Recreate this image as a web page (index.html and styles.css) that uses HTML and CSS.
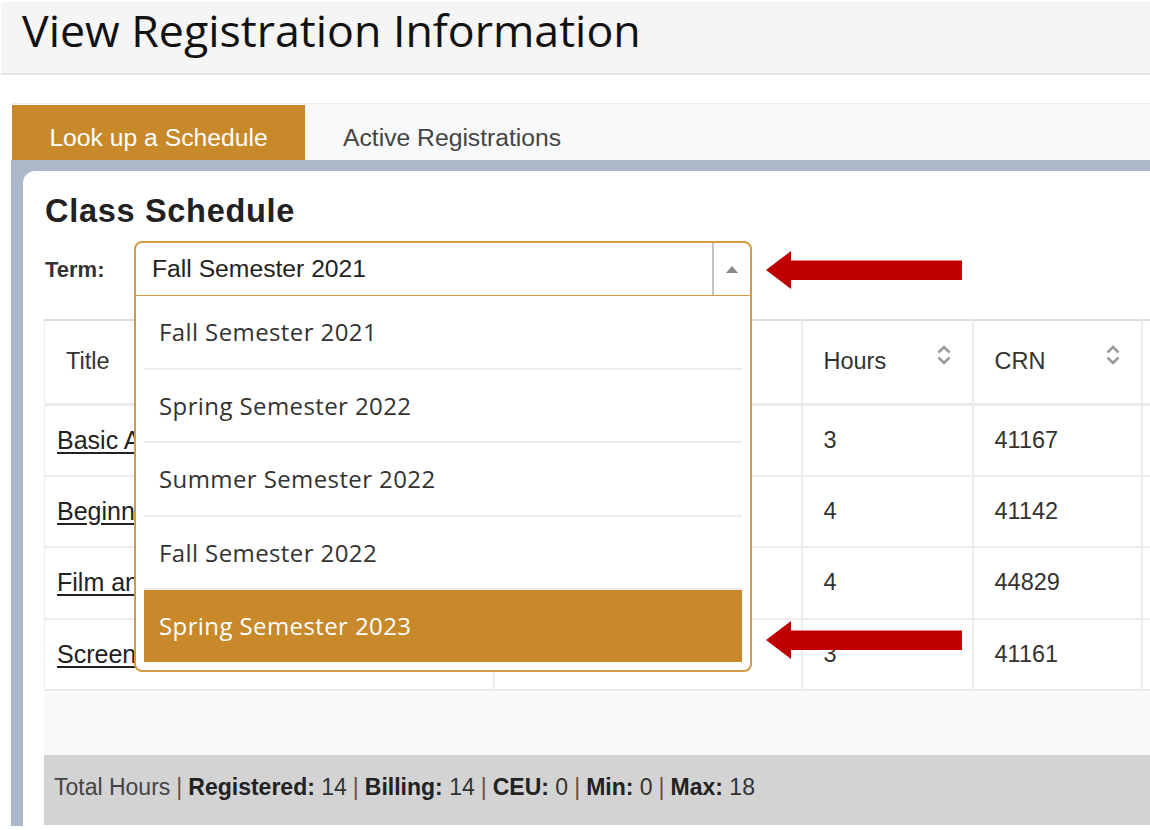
FILE: index.html
```html
<!DOCTYPE html>
<html lang="en">
<head>
<meta charset="utf-8">
<title>View Registration Information</title>
<link rel="stylesheet" href="styles.css">
</head>
<body>
<header class="page-header">
  <h1 class="page-title">View Registration Information</h1>
</header>

<nav class="tabs">
  <div class="tab tab-active">Look up a Schedule</div>
  <div class="tab">Active Registrations</div>
</nav>

<section class="frame">
  <div class="panel">
    <h2 class="panel-title">Class Schedule</h2>

    <div class="term-row">
      <label class="term-label">Term:</label>
      <div class="combo">
        <div class="combo-box">
          <span class="combo-value">Fall Semester 2021</span>
          <span class="combo-toggle"><span class="tri-up"></span></span>
        </div>
        <ul class="combo-list">
          <li class="combo-item">Fall Semester 2021</li>
          <li class="combo-item">Spring Semester 2022</li>
          <li class="combo-item">Summer Semester 2022</li>
          <li class="combo-item">Fall Semester 2022</li>
          <li class="combo-item combo-item-hl">Spring Semester 2023</li>
        </ul>
      </div>
    </div>

    <div class="grid-wrap">
      <table class="grid">
        <colgroup>
          <col class="c-title"><col class="c-details"><col class="c-hours"><col class="c-crn"><col class="c-more">
        </colgroup>
        <thead>
          <tr>
            <th><span class="th-in"><span>Title</span>
              <svg class="sort" viewBox="0 0 16 24" width="16" height="24"><polyline points="2.5,9.5 8,4 13.5,9.5"/><polyline points="2.5,14.5 8,20 13.5,14.5"/></svg></span></th>
            <th><span class="th-in"><span>Details</span></span></th>
            <th><span class="th-in"><span>Hours</span>
              <svg class="sort" viewBox="0 0 16 24" width="16" height="24"><polyline points="2.5,9.5 8,4 13.5,9.5"/><polyline points="2.5,14.5 8,20 13.5,14.5"/></svg></span></th>
            <th><span class="th-in"><span>CRN</span>
              <svg class="sort" viewBox="0 0 16 24" width="16" height="24"><polyline points="2.5,9.5 8,4 13.5,9.5"/><polyline points="2.5,14.5 8,20 13.5,14.5"/></svg></span></th>
            <th></th>
          </tr>
        </thead>
        <tbody>
          <tr><td class="td-link"><a href="#">Basic Acting</a></td><td>Lecture</td><td>3</td><td>41167</td><td></td></tr>
          <tr><td class="td-link"><a href="#">Beginning Directing</a></td><td>Lecture</td><td>4</td><td>41142</td><td></td></tr>
          <tr><td class="td-link"><a href="#">Film and Society</a></td><td>Lecture</td><td>4</td><td>44829</td><td></td></tr>
          <tr><td class="td-link"><a href="#">Screenwriting</a></td><td>Lecture</td><td>3</td><td>41161</td><td></td></tr>
        </tbody>
      </table>
    </div>

    <div class="totals">
      <span class="t-muted">Total Hours</span><span class="sep">|</span><b>Registered:</b>&nbsp;14<span class="sep">|</span><b>Billing:</b>&nbsp;14<span class="sep">|</span><b>CEU:</b>&nbsp;0<span class="sep">|</span><b>Min:</b>&nbsp;0<span class="sep">|</span><b>Max:</b>&nbsp;18
    </div>
  </div>
</section>

<svg class="callout callout-term" viewBox="0 0 196 38" width="196" height="38"><polygon points="0,19 25,0 25,9.5 196,9.5 196,29 25,29 25,38"/></svg>
<svg class="callout callout-item" viewBox="0 0 196 38" width="196" height="38"><polygon points="0,19 25,0 25,9.5 196,9.5 196,29 25,29 25,38"/></svg>
</body>
</html>
```

FILE: styles.css
```css
* { box-sizing: border-box; }

html, body {
  margin: 0;
  padding: 0;
  background: #ffffff;
  width: 1150px;
  height: 830px;
  overflow: hidden;
}

body {
  position: relative;
  font-family: "Liberation Sans", Arial, sans-serif;
  color: #333333;
}

/* ---------- page header ---------- */
.page-header {
  margin: 2px 0 28px 1px;
  height: 73px;
  background: #f5f5f5;
  border-bottom: 2px solid #e6e6e6;
  padding-left: 21px;
}

.page-title {
  margin: 0;
  font-family: "Open Sans", "Liberation Sans", sans-serif;
  font-weight: 400;
  font-size: 44.7px;
  line-height: 55px;
  color: #111111;
}

/* ---------- tabs ---------- */
.tabs {
  margin-left: 12px;
  height: 57px;
  border-top: 1px solid #ececec;
  background: #f8f9fb;
  padding-top: 1px;
  display: flex;
  align-items: stretch;
}

.tab {
  font-size: 24.7px;
  color: #444444;
  padding: 19px 38px 0 38px;
}

.tab-active {
  width: 293px;
  background: #c8892b;
  color: #ffffff;
  text-align: center;
  padding-left: 0;
  padding-right: 0;
}

/* ---------- frame + panel ---------- */
.frame {
  margin-left: 11px;
  height: 666px;
  background: #aab8c8;
  padding: 11px 0 0 12px;
}

.panel {
  height: 655px;
  background: #ffffff;
  border-top-left-radius: 12px;
  padding: 22px 0 0 21px;
  display: flex;
  flex-direction: column;
  overflow: hidden;
}

.panel-title {
  margin: 0 0 12px 1px;
  font-size: 32.5px;
  line-height: 36px;
  font-weight: 700;
  letter-spacing: 0.7px;
  color: #222222;
}

/* ---------- term combo ---------- */
.term-row {
  display: flex;
  align-items: center;
  height: 55px;
  position: relative;
  z-index: 5;
}

.term-label {
  width: 90px;
  padding-left: 1px;
  padding-top: 2px;
  font-size: 22px;
  font-weight: 700;
  color: #333333;
}

.combo {
  position: relative;
  width: 618px;
}

.combo-box {
  height: 55px;
  border: 2px solid #d39a44;
  border-bottom-width: 1.5px;
  border-radius: 8px 8px 0 0;
  background: #ffffff;
  display: flex;
  align-items: center;
}

.combo-value {
  flex: 1;
  padding-left: 16px;
  font-size: 24.7px;
  color: #222222;
}

.combo-toggle {
  width: 38px;
  height: 100%;
  border-left: 2px solid #c4c4c4;
  display: flex;
  align-items: center;
  justify-content: center;
}

.tri-up {
  width: 0;
  height: 0;
  border-left: 6px solid transparent;
  border-right: 6px solid transparent;
  border-bottom: 7px solid #8a8a8a;
}

.combo-list {
  position: absolute;
  left: 0;
  top: 100%;
  width: 618px;
  margin: 0;
  padding: 0 8px 8px 8px;
  list-style: none;
  background: #ffffff;
  border: 2px solid #d39a44;
  border-top: none;
  border-radius: 0 0 8px 8px;
}

.combo-item {
  height: 73.5px;
  border-bottom: 2px solid #ececec;
  padding-left: 15px;
  display: flex;
  align-items: center;
  font-family: "Open Sans", "Liberation Sans", sans-serif;
  font-size: 24px;
  letter-spacing: 0.4px;
  color: #333333;
}

.combo-item-hl {
  height: 71.5px;
  border-bottom: none;
  background: #c8892b;
  color: #ffffff;
}

/* ---------- grid ---------- */
.grid-wrap {
  margin-top: 23px;
  height: 436px;
  width: 1200px;
  background: #f8f9fa;
}

.grid {
  border-collapse: collapse;
  table-layout: fixed;
  width: 1300px;
  background: #ffffff;
  font-size: 23.5px;
  color: #333333;
}

.c-title { width: 449px; }
.c-details { width: 308px; }
.c-hours { width: 171px; }
.c-crn { width: 169px; }
.c-more { width: 203px; }

.grid th,
.grid td {
  border: 2px solid #ececec;
  padding: 0 0 0 21px;
  text-align: left;
  white-space: nowrap;
  overflow: hidden;
}

.grid th {
  height: 84px;
  font-weight: 400;
  border-top: 2px solid #dcdcdc;
  border-bottom: 3px solid #ececec;
  vertical-align: middle;
}

.grid tr > :first-child { border-left-width: 1px; }

.th-in {
  display: flex;
  align-items: center;
  justify-content: space-between;
  padding-right: 20px;
}

.sort {
  fill: none;
  stroke: #9a9a9a;
  stroke-width: 2.6;
  margin-top: -14px;
}

.grid td {
  height: 71.5px;
}

.grid td.td-link {
  padding-left: 12px;
  font-size: 25px;
}

.grid a {
  color: #222222;
  text-decoration: underline;
  text-underline-offset: 3px;
}

/* ---------- totals ---------- */
.totals {
  height: 70px;
  width: 1200px;
  background: #d3d3d3;
  padding: 19px 0 0 10px;
  font-size: 23px;
  color: #333333;
}

.totals b { font-weight: 700; color: #222222; }
.t-muted { color: #444444; }
.sep { color: #6b4b3a; margin: 0 6px; }

/* ---------- callout arrows ---------- */
.callout {
  position: absolute;
  left: 766px;
  fill: #c00000;
}
.callout-term { top: 251px; }
.callout-item { top: 621px; }
```
